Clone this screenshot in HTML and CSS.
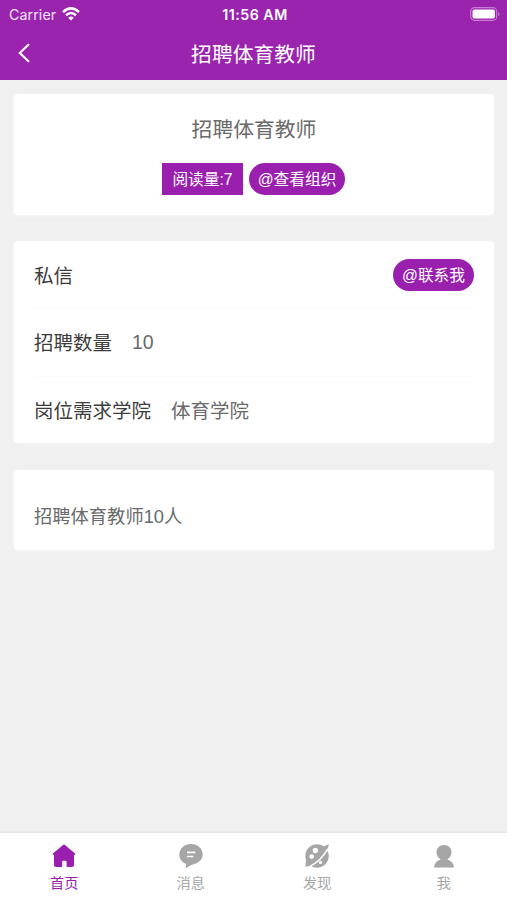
FILE: index.html
```html
<!DOCTYPE html>
<html lang="zh-CN">
<head>
<meta charset="utf-8">
<title>招聘体育教师</title>
<link rel="stylesheet" href="styles.css">
</head>
<body>
<header class="header">
  <div class="status">
    <div class="carrier"><span>Carrier</span>
      <svg width="18" height="14" viewBox="0 0 18 14" fill="none" stroke="#fff" stroke-width="2.5"><path d="M1 5.1Q9-2.4 17 5.1M4 8.3Q9 3.8 14 8.3"/><path d="M9 13.5 6.2 10.7Q9 8.4 11.8 10.7Z" fill="#fff" stroke="none"/></svg>
    </div>
    <span class="time">11:56 AM</span>
    <svg class="battery" width="31" height="14" viewBox="0 0 31 14"><rect x=".7" y=".7" width="26" height="12.6" rx="3.8" fill="none" stroke="#c77bd3" stroke-width="1.2"/><rect x="2.5" y="2.5" width="22.4" height="9" rx="2" fill="#fff"/><path d="M28.3 4.7Q31 7 28.3 9.3Z" fill="#c77bd3"/></svg>
  </div>
  <div class="navbar">
    <svg class="back" width="12" height="20" viewBox="0 0 12 20" fill="none" stroke="#fff" stroke-width="2.1" stroke-linecap="round"><path d="M10.4 1.8 1.8 10l8.6 8.2"/></svg>
    <h1>招聘体育教师</h1>
  </div>
</header>
<main class="content">
  <section class="card summary">
    <h2>招聘体育教师</h2>
    <div class="actions"><span class="tag reads">阅读量:7</span><span class="tag pill org">@查看组织</span></div>
  </section>
  <section class="card details">
    <div class="row"><span class="label">私信</span><span class="tag pill contact">@联系我</span></div>
    <div class="row"><span class="label">招聘数量</span><span class="value number">10</span></div>
    <div class="row"><span class="label">岗位需求学院</span><span class="value">体育学院</span></div>
  </section>
  <section class="card description">招聘体育教师10人</section>
</main>
<nav class="tabs">
  <div class="tab active">
    <svg width="24" height="24" viewBox="0 0 24 24" fill="currentColor"><path d="M11 1Q12 0 13 1L23.4 9.7Q24 10.4 23 10.8H22V21Q22 23 20 23H14.6V18Q14.6 16.8 13.4 16.8H11.3Q10.2 16.8 10.2 18V23H4Q2 23 2 21V10.8H1Q0 10.4.6 9.7Z"/></svg>
    <span>首页</span>
  </div>
  <div class="tab">
    <svg width="24" height="24" viewBox="0 0 24 24"><path fill="currentColor" d="M12 0C18.5 0 23.7 4.5 23.7 10.5 23.7 16 18.7 19.8 12.8 20.8L7.4 23.8Q6.2 24 6.6 22.6L7.2 20C3 18.4.3 15 .3 10.8.3 4.5 5.5 0 12 0Z"/><path d="M8 8.3h8.3M8 12.5h6.3" stroke="#fff" stroke-width="1.7"/></svg>
    <span>消息</span>
  </div>
  <div class="tab">
    <svg width="24" height="24" viewBox="0 0 24 24"><circle cx="12" cy="12" r="11.7" fill="currentColor"/><path d="M18.5 2.5 23.6.2Q24.2 2 21.8 6ZM1 16 .3 22.7 7 21.5Z" fill="currentColor"/><path d="M5 22.3Q15.5 17.4 22.8 5.2" fill="none" stroke="#fff" stroke-width="1.6"/><g fill="#fff"><circle cx="10.3" cy="6.5" r="2.7"/><circle cx="6.7" cy="12.6" r="2.3"/><circle cx="15.6" cy="18.4" r="1.7"/></g></svg>
    <span>发现</span>
  </div>
  <div class="tab">
    <svg width="24" height="24" viewBox="0 0 24 24" fill="currentColor"><path d="M12 1C16.4 1 19.5 4.2 19.5 8.3 19.5 11.4 17.8 14 15.4 15.4 19.4 16.6 21.7 19.4 22 23.6H2C2.3 19.4 4.6 16.6 8.6 15.4 6.2 14 4.5 11.4 4.5 8.3 4.5 4.2 7.6 1 12 1Z"/></svg>
    <span>我</span>
  </div>
</nav>
</body>
</html>
```

FILE: styles.css
```css
* { box-sizing: border-box; }
body {
  margin: 0;
  height: 900px;
  display: flex;
  flex-direction: column;
  background: #f0f0f0;
  color: #6a6a6a;
  font-family: "Liberation Sans", "Noto Sans CJK SC", sans-serif;
}
h1, h2 { margin: 0; font-weight: 400; font-size: 20.8px; line-height: 30px; }
.header { height: 80px; background: #9b24af; color: #fff; }
.status {
  height: 27px;
  padding: 0 6px 0 9px;
  display: grid;
  grid-template-columns: 1fr auto 1fr;
  align-items: center;
  font: 14.2px/27px Inter, sans-serif;
}
.carrier { display: flex; align-items: center; gap: 6px; color: #f5e4f7; letter-spacing: .1px; }
.time { padding-top: 1px; font-weight: 600; font-size: 14.2px; letter-spacing: .5px; }
.battery { justify-self: end; }
.navbar {
  height: 53px;
  padding: 0 18px;
  display: grid;
  grid-template-columns: 1fr auto 1fr;
  align-items: center;
}
.back { margin-bottom: 1px; }
.navbar h1 { grid-column: 2; padding-top: 2px; }
.content {
  flex: 1;
  padding: 14px 13px 0 14px;
  display: flex;
  flex-direction: column;
  gap: 26px;
}
.card { background: #fff; border-radius: 4px; box-shadow: 0 1px 3px #f7f7f7; }
.summary { height: 121px; padding-top: 21px; text-align: center; }
.actions { display: flex; justify-content: center; gap: 6px; margin: 18px 1px 0 0; }
.tag {
  height: 32px;
  display: flex;
  align-items: center;
  justify-content: center;
  padding-top: 2px;
  background: #9b1fae;
  color: #fff;
  font-size: 15.7px;
  line-height: 30px;
  white-space: nowrap;
}
.pill { border-radius: 16px; }
.reads { width: 81px; }
.org { width: 96px; }
.contact { width: 81px; margin-left: auto; }
.details { height: 202px; margin-bottom: 1px; padding: 0 20px; }
.row { height: 67.3px; display: flex; align-items: center; gap: 20px; font-size: 19.5px; }
.row + .row { padding-bottom: 1px; border-top: 1px solid #fcfcfc; }
.label { color: #3c3c3c; }
.number { padding-top: 2px; }
.description { height: 80px; padding: 33px 20px 0; font-size: 18.3px; line-height: 27px; }
.tabs {
  height: 69px;
  padding-left: 1px;
  display: grid;
  grid-template-columns: repeat(4, 1fr);
  background: #fff;
  border-top: 2px solid #eaeaea;
}
.tab {
  display: flex;
  flex-direction: column;
  align-items: center;
  padding-top: 11px;
  color: #a6a6a6;
  font-size: 14.2px;
  line-height: 20px;
}
.tab span { margin-top: 5px; }
.active { color: #9b1fae; }
```
